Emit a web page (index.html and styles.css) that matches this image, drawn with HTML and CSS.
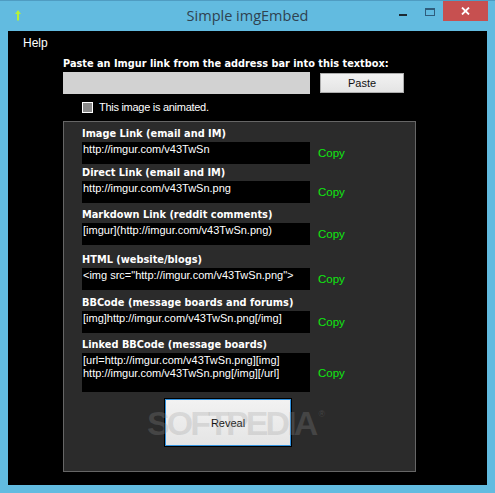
FILE: index.html
```html
<!DOCTYPE html>
<html lang="en">
<head>
<meta charset="utf-8">
<title>Simple imgEmbed</title>
<link rel="stylesheet" href="styles.css">
</head>
<body>
<div class="window">
  <header class="titlebar">
    <svg class="app-icon" width="6" height="11" viewBox="0 0 6 11"><path d="M3 0 6 4H4V10.500H2V4H0Z" fill="#b4f03c"/></svg>
    <span class="title">Simple imgEmbed</span>
    <div class="controls">
      <span class="min"></span>
      <span class="max"></span>
      <span class="close"><svg width="9" height="8" viewBox="0 0 9 8"><path d="M1 .5 8 7.500M8 .5 1 7.500" stroke="#fff" stroke-width="1.800" fill="none"/></svg></span>
    </div>
  </header>
  <main class="client">
    <nav class="menu">Help</nav>
    <div class="intro">
      <div class="label">Paste an Imgur link from the address bar into this textbox:</div>
      <div class="paste-row">
        <div class="textbox"></div>
        <button class="paste">Paste</button>
      </div>
      <label class="check"><span class="box"></span>This image is animated.</label>
    </div>
    <section class="panel">
      <div class="label first">Image Link (email and IM)</div>
      <div class="row"><div class="field">http://imgur.com/v43TwSn</div><span class="copy">Copy</span></div>
      <div class="label">Direct Link (email and IM)</div>
      <div class="row"><div class="field">http://imgur.com/v43TwSn.png</div><span class="copy">Copy</span></div>
      <div class="label mid">Markdown Link (reddit comments)</div>
      <div class="row"><div class="field">[imgur](http://imgur.com/v43TwSn.png)</div><span class="copy">Copy</span></div>
      <div class="label tall">HTML (website/blogs)</div>
      <div class="row"><div class="field">&lt;img src="http://imgur.com/v43TwSn.png"&gt;</div><span class="copy">Copy</span></div>
      <div class="label semi">BBCode (message boards and forums)</div>
      <div class="row"><div class="field">[img]http://imgur.com/v43TwSn.png[/img]</div><span class="copy">Copy</span></div>
      <div class="label mid">Linked BBCode (message boards)</div>
      <div class="row"><div class="field big">[url=http://imgur.com/v43TwSn.png][img]<br>http://imgur.com/v43TwSn.png[/img][/url]</div><span class="copy">Copy</span></div>
      <button class="reveal">Reveal</button>
    </section>
  </main>
  <div class="watermark">SOFTPEDIA<sup>®</sup></div>
</div>
</body>
</html>
```
FILE: styles.css
```css
* { box-sizing: border-box; }
html, body { margin: 0; height: 100%; background: #62bbe0; }
body { overflow: hidden; }
.window {
  position: relative;
  width: 495px;
  height: 493px;
  display: flex;
  flex-direction: column;
  border-top: 1px solid #4f9cc2;
  font-family: "Liberation Sans", Arial, sans-serif;
  font-size: 11px;
  color: #fff;
}
.titlebar {
  position: relative;
  height: 30px;
  flex: none;
  display: flex;
  align-items: flex-start;
  justify-content: center;
}
.app-icon { position: absolute; left: 15px; top: 9px; }
.title {
  font-family: "Open Sans", sans-serif;
  font-size: 14.500px;
  line-height: 30px;
  color: #2f4250;
}
.controls {
  position: absolute;
  right: 7px;
  top: 0;
  display: flex;
  align-items: flex-start;
}
.min { width: 8px; height: 2px; background: #1d2a33; margin: 13px 18px 0 0; }
.max { width: 10px; height: 8px; border: 1px solid #2f5d7c; border-top-width: 2px; margin: 7px 8px 0 0; }
.close {
  width: 45px;
  height: 20px;
  background: #c75050;
  display: flex;
  align-items: center;
  justify-content: center;
}
.client {
  flex: 1;
  margin: 0 8px 8px;
  background: #000;
  padding: 0 0 13px 55px;
  position: relative;
  display: flex;
  flex-direction: column;
}
.menu { position: absolute; left: 15px; top: 5px; font-size: 12px; line-height: 15px; }
.intro { height: 90px; padding-top: 25px; }
.label {
  font-family: "DejaVu Sans", sans-serif;
  font-weight: 700;
  font-size: 9.800px;
  line-height: 18px;
  height: 17px;
  color: #fff;
}
.intro .label { height: 16px; line-height: 15px; font-size: 9.770px; white-space: nowrap; }
.paste-row { display: flex; align-items: center; gap: 10px; }
.textbox { width: 247px; height: 22px; background: #d2d2d2; }
button {
  font: inherit;
  color: #111;
  background: linear-gradient(#f2f2f2, #e4e4e4);
  padding: 0;
  border-radius: 0;
}
.paste { width: 84px; height: 20px; border: 1px solid #adadad; }
.check { display: flex; align-items: center; gap: 6px; margin: 7px 0 0 19px; line-height: 13px; letter-spacing: -0.280px; }
.box { width: 11px; height: 11px; background: #8a8a8a; border: 1px solid #fff; }
.panel {
  width: 353px;
  flex: 1;
  background: #2b2b2b;
  border: 1px solid #666;
  padding: 0 0 0 18px;
  display: flex;
  flex-direction: column;
}
.first { margin-top: 3px; }
.mid { margin-top: 3px; }
.tall { margin-top: 6px; }
.semi { margin-top: 4px; }
.row { display: flex; align-items: center; gap: 8px; }
.field {
  width: 228px;
  height: 22px;
  background: #000;
  padding: 1px 1px 0;
  line-height: 13px;
  white-space: nowrap;
}
.field.big { height: 39px; }
.copy { color: #10e810; font-size: 11.500px; }
.reveal {
  width: 126px;
  height: 47px;
  margin: 7px 0 0 83px;
  border: 1px solid #3393df;
  box-shadow: 0 0 0 1px #000;
  color: #111;
  background: linear-gradient(#f2f2f2, #e5e5e5);
}
.watermark {
  position: absolute;
  left: 147px;
  top: 404px;
  font-family: "Liberation Sans", sans-serif;
  font-weight: 700;
  font-size: 34px;
  line-height: 36px;
  letter-spacing: -2.900px;
  color: rgba(150, 150, 150, 0.25);
  pointer-events: none;
}
.watermark sup { font-size: 9px; vertical-align: 18px; line-height: 0; font-weight: 400; letter-spacing: 0; margin-left: 3px; }
```
